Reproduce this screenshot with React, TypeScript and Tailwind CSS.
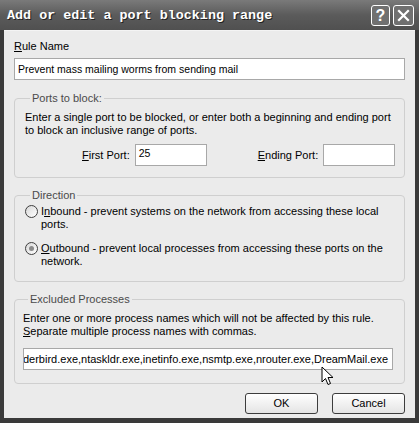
import React from "react";

function Radio({ checked }: { checked?: boolean }) {
  return (
    <span className="flex h-[13px] w-[13px] shrink-0 items-center justify-center rounded-full border border-[#3f3f3f] bg-gradient-to-br from-[#d8d8d8] to-white">
      {checked && <span className="h-[5px] w-[5px] rounded-full bg-[#8a8a8a]" />}
    </span>
  );
}

function Group({ title, children, className }: { title: string; children: React.ReactNode; className?: string }) {
  return (
    <fieldset className={"min-w-0 rounded-[4px] border border-[#cfcfcf] " + (className ?? "")}>
      <legend className="ml-[5px] px-[2px] leading-[13px] text-[#4a4a4a]">{title}</legend>
      {children}
    </fieldset>
  );
}

export default function App() {
  return (
    <div className="relative flex h-[423px] w-[419px] flex-col overflow-hidden bg-[#3a3a3a] font-['Liberation_Sans',Arial,sans-serif] text-[11px] leading-[13px] text-black">
      {/* title bar */}
      <div className="flex h-[30px] shrink-0 items-center bg-gradient-to-b from-[#7a7a7a] via-[#5b5b5b] to-[#505050] pl-[7px] pr-[5px]">
        <span className="font-['Liberation_Mono',monospace] text-[13.4px] font-bold text-white [text-shadow:1px_1px_0_#222]">
          Add or edit a port blocking range
        </span>
        <div className="ml-auto flex gap-[3px]">
          <div className="flex h-[21px] w-[19px] items-center justify-center rounded-[3px] border border-white bg-[#707070] text-[16px] font-bold text-white">
            ?
          </div>
          <div className="flex h-[21px] w-[21px] items-center justify-center rounded-[3px] border border-white bg-[#707070]">
            <svg width="13" height="13" viewBox="0 0 13 13">
              <path d="M2 2 L11 11 M11 2 L2 11" stroke="white" strokeWidth="2.2" strokeLinecap="square" />
            </svg>
          </div>
        </div>
      </div>

      {/* body */}
      <div className="mx-[4px] mb-[5px] flex min-w-0 flex-1 flex-col border-t border-[#f4f4f4] bg-[#ebebeb] px-[10px] pt-[9px]">
        <div>
          <span className="underline">R</span>ule Name
        </div>
        <div className="mt-[5px] flex h-[22px] items-center border border-[#a8a8a8] bg-white px-[3px] text-[10.5px]">
          Prevent mass mailing worms from sending mail
        </div>

        <Group title="Ports to block:" className="mt-[12px] pb-[11px] pl-[10px] pr-[10px]">
          <div className="mt-[6px]">
            Enter a single port to be blocked, or enter both a beginning and ending port
            <br />
            to block an inclusive range of ports.
          </div>
          <div className="mt-[7px] flex items-center whitespace-nowrap">
            <span className="ml-[57px] shrink-0">
              <span className="underline">F</span>irst Port:
            </span>
            <div className="ml-[5px] flex h-[22px] w-[72px] shrink-0 items-center border border-[#a8a8a8] bg-white px-[3px] pb-[4px] text-[10.5px]">
              25
            </div>
            <span className="ml-[51px] shrink-0">
              <span className="underline">E</span>nding Port:
            </span>
            <div className="ml-[5px] h-[22px] w-[72px] shrink-0 border border-[#a8a8a8] bg-white" />
          </div>
        </Group>

        <Group title="Direction" className="mt-[11px] pb-[13px] pl-[10px] pr-[10px]">
          <div className="mt-[3px] flex gap-[3px]">
            <Radio />
            <div>
              I<span className="underline">n</span>bound - prevent systems on the network from accessing these local
              <br />
              ports.
            </div>
          </div>
          <div className="mt-[11px] flex gap-[3px]">
            <Radio checked />
            <div>
              <span className="underline">O</span>utbound - prevent local processes from accessing these ports on the
              <br />
              network.
            </div>
          </div>
        </Group>

        <Group title="Excluded Processes" className="mt-[11px] pb-[13px] pl-[8px] pr-[11px]">
          <div className="mt-[6px]">
            Enter one or more process names which will not be affected by this rule.
            <br />
            <span className="underline">S</span>eparate multiple process names with commas.
          </div>
          <div className="mt-[10px] flex h-[22px] min-w-0 items-center justify-end overflow-hidden whitespace-nowrap border border-[#a8a8a8] bg-white pr-[4px] text-[11px]">
            <span className="shrink-0">thunderbird.exe,ntaskldr.exe,inetinfo.exe,nsmtp.exe,nrouter.exe,DreamMail.exe</span>
          </div>
        </Group>

        <div className="mt-[9px] flex justify-end gap-[14px]">
          <button className="h-[21px] w-[73px] rounded-[3px] border border-[#3c3c3c] bg-gradient-to-b from-white to-[#e4e4e4] text-[11px]">
            OK
          </button>
          <button className="h-[21px] w-[73px] rounded-[3px] border border-[#3c3c3c] bg-gradient-to-b from-white to-[#e4e4e4] text-[11px]">
            Cancel
          </button>
        </div>
      </div>

      {/* mouse pointer */}
      <svg className="absolute left-[321px] top-[366px]" width="14" height="21" viewBox="0 0 14 21">
        <path d="M1 1 L1 16 L4.5 12.5 L7 18.5 L9.5 17.5 L7 11.5 L12 11.5 Z" fill="white" stroke="black" strokeWidth="1" strokeLinejoin="round" />
      </svg>
    </div>
  );
}
